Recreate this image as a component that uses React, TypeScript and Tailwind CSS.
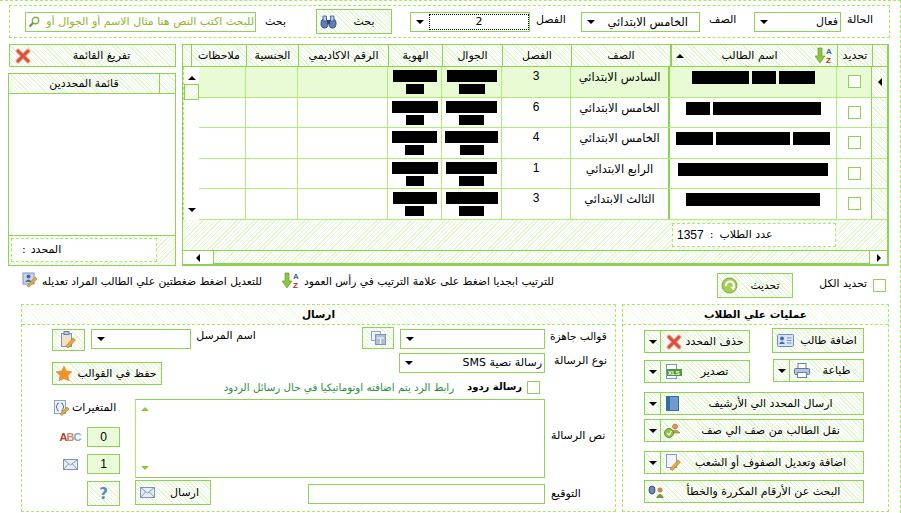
import React from "react";

const hatch =
  "bg-[repeating-linear-gradient(135deg,#ffffff_0,#ffffff_2px,#e2f7cd_2px,#e2f7cd_3px)]";
const hatchUp =
  "bg-[repeating-linear-gradient(45deg,#ffffff_0,#ffffff_2px,#e2f7cd_2px,#e2f7cd_3px)]";
const hatchFaint =
  "bg-[repeating-linear-gradient(45deg,#ffffff_0,#ffffff_2px,#f3fbea_2px,#f3fbea_3px)]";
const line = "border-[#8cd354]";
const soft = "border-[#afec78]";
const dashed = "border-dashed border-[#a8ea66]";

const Arrow = ({ up, side }: { up?: boolean; side?: "l" | "r" }) => {
  if (side === "l")
    return <span className="w-0 h-0 border-y-[4px] border-y-transparent border-r-[4px] border-r-black" />;
  if (side === "r")
    return <span className="w-0 h-0 border-y-[4px] border-y-transparent border-l-[4px] border-l-black" />;
  return up ? (
    <span className="w-0 h-0 border-x-[4px] border-x-transparent border-b-[4px] border-b-black" />
  ) : (
    <span className="w-0 h-0 border-x-[4px] border-x-transparent border-t-[4px] border-t-black" />
  );
};

const XIcon = () => (
  <svg width="16" height="16" viewBox="0 0 16 16">
    <path d="M3 3 L13 13 M13 3 L3 13" stroke="#f3b6a8" strokeWidth="5" strokeLinecap="round" />
    <path d="M3 3 L13 13 M13 3 L3 13" stroke="#d9503c" strokeWidth="3" strokeLinecap="round" />
  </svg>
);
const Binoculars = () => (
  <svg width="17" height="14" viewBox="0 0 17 14">
    <ellipse cx="4.5" cy="8.5" rx="3.5" ry="4.5" fill="#5f7fb5" stroke="#2f4a80" />
    <ellipse cx="12.5" cy="8.5" rx="3.5" ry="4.5" fill="#5f7fb5" stroke="#2f4a80" />
    <rect x="3" y="1" width="3.5" height="5" fill="#b8c8e4" stroke="#2f4a80" strokeWidth=".7" />
    <rect x="10.5" y="1" width="3.5" height="5" fill="#b8c8e4" stroke="#2f4a80" strokeWidth=".7" />
    <rect x="7" y="5" width="3" height="4" fill="#2f4a80" />
  </svg>
);
const Lens = () => (
  <svg width="12" height="12" viewBox="0 0 12 12">
    <circle cx="7.5" cy="4.5" r="3.2" fill="none" stroke="#7cb342" strokeWidth="1.4" />
    <path d="M5 7 L1.5 10.5" stroke="#5f9a2c" strokeWidth="2" />
  </svg>
);
const AZ = () => (
  <svg width="18" height="17" viewBox="0 0 18 17">
    <path d="M3 1 H7 V9 H10 L5 16 L0 9 H3 Z" fill="#8cc63f" stroke="#5f8f2a" strokeWidth=".6" />
    <text x="11" y="7" fontSize="8" fontWeight="700" fill="#3f5f9f" fontFamily="Liberation Sans">A</text>
    <text x="11" y="16" fontSize="8" fontWeight="700" fill="#b02a2a" fontFamily="Liberation Sans">Z</text>
  </svg>
);
const Refresh = () => (
  <svg width="17" height="17" viewBox="0 0 17 17">
    <circle cx="8.5" cy="8.5" r="7.5" fill="#a6cf5a" stroke="#7aa83a" />
    <path d="M5 9 A4 4 0 1 1 12 11" fill="none" stroke="#fff" strokeWidth="2" />
    <path d="M9.5 10 L14.5 10 L12.3 13.5 Z" fill="#fff" />
  </svg>
);
const EditUser = () => (
  <svg width="16" height="16" viewBox="0 0 16 16">
    <rect x="1" y="1" width="11" height="11" fill="#c9d6ec" stroke="#7f93bd" />
    <circle cx="6.5" cy="4.5" r="2" fill="#55688f" />
    <path d="M3 10 Q6.5 5 10 10 Z" fill="#55688f" />
    <path d="M5 14 L13 5 L15 7 L7 15 Z" fill="#e8a93c" stroke="#a8762a" strokeWidth=".6" />
  </svg>
);
const Card = () => (
  <svg width="17" height="13" viewBox="0 0 17 13">
    <rect x=".5" y=".5" width="16" height="12" rx="1" fill="#d8e3f5" stroke="#6f8cc0" />
    <circle cx="5" cy="4.5" r="2" fill="#3f69b0" />
    <path d="M2 10 Q5 5 8 10 Z" fill="#3f69b0" />
    <path d="M10 4 H14.5 M10 6.5 H14.5 M10 9 H14.5" stroke="#7f96c4" />
  </svg>
);
const Printer = () => (
  <svg width="16" height="15" viewBox="0 0 16 15">
    <rect x="4" y=".5" width="8" height="6" fill="#fff" stroke="#6b7fa8" />
    <rect x=".5" y="5.5" width="15" height="6" rx="1" fill="#b4c3de" stroke="#5f739c" />
    <rect x="3.5" y="9.5" width="9" height="5" fill="#fff" stroke="#6b7fa8" />
  </svg>
);
const Xls = () => (
  <svg width="16" height="15" viewBox="0 0 16 15">
    <rect x=".5" y=".5" width="10" height="14" fill="#fff" stroke="#7f93bd" />
    <rect x="1" y="5" width="15" height="7" fill="#4f9a3a" />
    <text x="2" y="11" fontSize="6" fontWeight="700" fill="#fff" fontFamily="Liberation Sans">XLS</text>
  </svg>
);
const Book = () => (
  <svg width="13" height="15" viewBox="0 0 13 15">
    <rect x=".5" y=".5" width="12" height="14" fill="#6f9ccf" stroke="#3f6a9f" />
    <rect x="1" y="1" width="3" height="13" fill="#2f6f9f" />
  </svg>
);
const MoveUser = () => (
  <svg width="17" height="15" viewBox="0 0 17 15">
    <circle cx="11" cy="3.5" r="2.5" fill="#d89a5a" stroke="#a86a2a" strokeWidth=".6" />
    <path d="M7 10 Q11 4 16 10 Z" fill="#d89a5a" stroke="#a86a2a" strokeWidth=".6" />
    <circle cx="5" cy="10" r="4.5" fill="#8cc63f" stroke="#5f8f2a" />
    <path d="M3 10 L5 12 L7.5 8" fill="none" stroke="#fff" strokeWidth="1.2" />
  </svg>
);
const PagePen = () => (
  <svg width="15" height="17" viewBox="0 0 15 17">
    <rect x=".5" y=".5" width="10" height="13" fill="#f2f5fb" stroke="#8a9cc0" />
    <path d="M4 15 L12 6 L14.5 8 L6.5 16.5 Z" fill="#e8a93c" stroke="#a8762a" strokeWidth=".6" />
  </svg>
);
const DupSearch = () => (
  <svg width="17" height="14" viewBox="0 0 17 14">
    <ellipse cx="4" cy="5" rx="3" ry="4" fill="#6f88b8" stroke="#34507f" />
    <circle cx="12" cy="5" r="2.5" fill="#c98a4a" />
    <path d="M8 13 Q12 5 16 13 Z" fill="#6f9a4a" />
  </svg>
);
const Template = () => (
  <svg width="15" height="14" viewBox="0 0 15 14">
    <rect x=".5" y=".5" width="9" height="9" fill="#eef2fa" stroke="#8fa3c8" />
    <rect x="4.5" y="3.5" width="10" height="10" fill="#aebfdd" stroke="#7f93bd" />
    <path d="M6 7 H13 M9.5 7 V13" stroke="#fff" />
  </svg>
);
const Clip = () => (
  <svg width="15" height="18" viewBox="0 0 15 18">
    <rect x=".5" y="2.5" width="10" height="13" fill="#f0e0c4" stroke="#7f93bd" />
    <rect x="3" y=".5" width="5" height="3" fill="#b8c8e4" stroke="#6b7fa8" />
    <path d="M5 15 L12 7 L14.5 9 L7 17 Z" fill="#e8a93c" stroke="#a8762a" strokeWidth=".6" />
  </svg>
);
const Star = () => (
  <svg width="16" height="15" viewBox="0 0 16 15">
    <path d="M8 0 L10.4 5 L16 5.7 L12 9.5 L13 15 L8 12.4 L3 15 L4 9.5 L0 5.7 L5.6 5 Z" fill="#f0932b" stroke="#d97c1a" strokeWidth=".5" />
  </svg>
);
const Braces = () => (
  <svg width="16" height="16" viewBox="0 0 16 16">
    <rect x=".5" y=".5" width="11" height="13" fill="#eef3fb" stroke="#8fa3c8" />
    <path d="M5 3 Q3 3 3 5 V6 L2 7 L3 8 V9 Q3 11 5 11 M7 3 Q9 3 9 5 V6 L10 7 L9 8 V9 Q9 11 7 11" fill="none" stroke="#4f6ea8" />
    <path d="M6 14 L13 7 L15 9 L8 15.5 Z" fill="#e8a93c" stroke="#a8762a" strokeWidth=".6" />
  </svg>
);
const Mail = () => (
  <svg width="15" height="11" viewBox="0 0 15 11">
    <rect x=".5" y=".5" width="14" height="10" fill="#e8eef8" stroke="#7f93bd" />
    <path d="M.5 .5 L7.5 6 L14.5 .5 M.5 10.5 L5.5 5 M14.5 10.5 L9.5 5" fill="none" stroke="#7f93bd" />
  </svg>
);

function Select({ width, height = "h-5", value, focus, pad = "pr-[2px]", size = "" }: {
  width: string;
  height?: string;
  value?: string;
  focus?: boolean;
  pad?: string;
  size?: string;
}) {
  return (
    <div className={`${width} ${height} border ${line} bg-white flex items-center shrink-0`}>
      <span className="w-[18px] flex justify-center shrink-0">
        <Arrow />
      </span>
      {focus ? (
        <div className="flex-1 h-4 border border-dotted border-black text-center leading-[13px]">{value}</div>
      ) : (
        <div dir="rtl" className={`flex-1 ${pad} ${size} leading-[14px] whitespace-nowrap`}>{value}</div>
      )}
    </div>
  );
}

// small hatched button, optional dropdown part on the left
function Btn({ width, label, icon, menu, iconLeft = "pl-1", pad = "pr-[7px]" }: {
  width: string;
  label?: string;
  icon?: React.ReactNode;
  menu?: boolean;
  iconLeft?: string;
  pad?: string;
}) {
  return (
    <div className={`${width} h-[23px] border ${line} ${hatchUp} flex items-center shrink-0`}>
      {menu && (
        <div className={`w-4 h-full border-r ${line} flex items-center justify-center shrink-0`}>
          <Arrow />
        </div>
      )}
      <div className={`w-6 flex justify-start shrink-0 ${iconLeft}`}>{icon}</div>
      <div className={`flex-1 text-center ${pad} whitespace-nowrap`}>{label}</div>
    </div>
  );
}

const Black = ({ w, h = "h-[12px]" }: { w: number; h?: string }) => (
  <div className={`bg-black ${h}`} style={{ width: w }} />
);

const rows = [
  { grade: "السادس الابتدائي", cls: "3", name: [57, 24, 36], id: [44, 18], phone: [50, 26] },
  { grade: "الخامس الابتدائي", cls: "6", name: [24, 108], id: [46, 18], phone: [51, 25] },
  { grade: "الخامس الابتدائي", cls: "4", name: [37, 74, 37], id: [45, 19], phone: [53, 24] },
  { grade: "الرابع الابتدائي", cls: "1", name: [150], id: [46, 18], phone: [51, 25] },
  { grade: "الثالث الابتدائي", cls: "3", name: [134], id: [44, 19], phone: [52, 25] },
];

const headCols = "grid grid-cols-[9px_55px_52px_90px_54px_60px_69px_99px_167px_35px_1fr]";
const rowCols = "grid grid-cols-[47px_52px_90px_54px_60px_69px_99px_167px_35px_1fr]";

function StudentGrid() {
  const heads = ["", "ملاحظات", "الجنسية", "الرقم الاكاديمي", "الهوية", "الجوال", "الفصل", "الصف"];
  return (
    <div className={`w-[707px] h-[222px] border-t border-l border-r-2 border-b-2 ${line} flex flex-col`}>
      <div className={`${headCols} h-[22px] border-b ${line} ${hatchUp} shrink-0`}>
        {heads.map((h, i) => (
          <div key={i} className={`border-r ${line} flex items-center justify-center whitespace-nowrap`}>
            {h}
          </div>
        ))}
        <div className={`border-l border-r ${line} flex items-center justify-between px-[4px]`}>
          <Arrow up />
          <span>اسم الطالب</span>
          <AZ />
        </div>
        <div className={`border-r ${line} flex items-center justify-center`}>تحديد</div>
        <div />
      </div>

      <div className="flex h-[153px] shrink-0">
        <div className="w-4 flex flex-col items-center shrink-0 border-l border-dashed border-[#a8ea66]">
          <div className="h-[17px] flex items-end pb-[4px]">
            <Arrow up />
          </div>
          <div className={`w-[15px] h-4 border ${line} ${hatch}`} />
          <div className="flex-1" />
          <div className="h-[14px] flex items-start pt-[2px]">
            <Arrow />
          </div>
        </div>
        <div className="flex-1 flex flex-col">
          {rows.map((r, i) => (
            <div key={i} className={`${rowCols} h-[31px] border-b ${soft} ${i === 0 ? "bg-[#e8fbd5]" : "bg-white"}`}>
              <div className={`border-r ${soft}`} />
              <div className={`border-r ${soft}`} />
              <div className={`border-r ${soft}`} />
              <div className={`border-r ${soft} flex flex-col items-center pt-[3px] gap-[2px]`}>
                <Black w={r.id[0]} />
                <Black w={r.id[1]} h="h-[10px]" />
              </div>
              <div className={`border-r ${soft} flex flex-col items-center pt-[3px] gap-[2px]`}>
                <Black w={r.phone[0]} />
                <Black w={r.phone[1]} h="h-[10px]" />
              </div>
              <div className={`border-r ${soft} text-center pt-[2px] font-['Liberation_Sans'] text-[12px]`}>{r.cls}</div>
              <div className={`border-r-2 ${line} text-center pt-[3px] text-[11.5px] whitespace-nowrap`}>{r.grade}</div>
              <div className={`border-r ${soft} flex justify-center gap-[3px] pt-[4px]`}>
                {r.name.map((w, j) => (
                  <Black key={j} w={w} h="h-[13px]" />
                ))}
              </div>
              <div className={`border-r ${line} flex justify-center pt-[8px]`}>
                <div className={`w-[13px] h-[13px] border ${line} bg-white`} />
              </div>
              <div className={`${hatchUp} flex items-center justify-center`}>{i === 0 && <Arrow side="l" />}</div>
            </div>
          ))}
        </div>
      </div>

      <div className={`h-[30px] ${hatch} flex justify-end pt-[3px] pr-[51px] shrink-0`}>
        <div className={`w-[164px] h-[24px] border ${dashed} bg-white flex items-center gap-[6px] pl-[4px]`}>
          <span className="font-['Liberation_Sans'] text-[12px]">1357</span>
          <span>:</span>
          <span>عدد الطلاب</span>
        </div>
      </div>

      <div className={`flex-1 flex border-t ${line} bg-white`}>
        <div className="w-[30px] flex items-center justify-center shrink-0">
          <Arrow side="l" />
        </div>
        <div className={`flex-1 border border-t-0 ${line} ${hatch}`} />
        <div className="w-[17px] flex items-center justify-center shrink-0">
          <Arrow side="r" />
        </div>
      </div>
    </div>
  );
}

function SelectedList() {
  return (
    <div className="w-[168px] flex flex-col">
      <div className={`ml-[1px] w-[167px] h-[23px] border ${line} ${hatchUp} flex items-center shrink-0`}>
        <div className="w-7 pl-[5px]">
          <XIcon />
        </div>
        <div className="flex-1 text-center pr-[10px]">تفريغ القائمة</div>
      </div>
      <div className={`mt-[6px] h-[193px] border ${line} flex flex-col`}>
        <div className={`h-5 border-b ${line} ${hatchUp} flex shrink-0`}>
          <div className="flex-1 text-center leading-[19px]">قائمة المحددين</div>
          <div className={`w-[16px] border-l ${line}`} />
        </div>
        <div className="flex-1" />
        <div className={`h-[30px] border-t ${line} ${hatch} pt-[2px] pl-[2px] shrink-0`}>
          <div className={`w-[146px] h-[24px] border ${dashed} bg-white flex items-center pl-[10px]`}>
            <span>:</span>
            <span className="ml-[5px]">المحدد</span>
          </div>
        </div>
      </div>
    </div>
  );
}

function SendPanel() {
  return (
    <div className={`w-[595px] h-[208px] border ${dashed} flex flex-col`}>
      <div className={`h-[20px] border-b ${dashed} ${hatchFaint} text-center font-bold text-[10.5px] leading-[19px] shrink-0`}>ارسال</div>
      <div className="pl-[30px] pt-[2px] flex flex-col">
        <div className="flex items-start h-[23px]">
          <div className={`w-[33px] h-[22px] border ${line} ${hatchUp} mt-[2px] flex items-center justify-center`}>
            <Clip />
          </div>
          <div className="ml-[6px] mt-[2px]">
            <Select width="w-[100px]" />
          </div>
          <div className="ml-1 w-[62px] mt-[2px] text-center whitespace-nowrap">اسم المرسل</div>
          <div className={`ml-[105px] w-[32px] h-[22px] border ${line} ${hatchUp} flex items-center justify-center`}>
            <Template />
          </div>
          <div className="ml-[6px] mt-[2px]">
            <Select width="w-[145px]" />
          </div>
          <div className="ml-[5px] mt-[2px] text-[10.5px] whitespace-nowrap">قوالب جاهزة</div>
        </div>

        <div className="flex h-[41px] mt-[3px]">
          <div className={`mt-[9px] w-[110px] h-[23px] border ${line} ${hatchUp} flex items-center shrink-0`}>
            <span className="pl-[3px]">
              <Star />
            </span>
            <span className="flex-1 text-center pl-[1px] whitespace-nowrap">حفظ في القوالب</span>
          </div>
          <div className="ml-[60px] w-[388px] flex flex-col shrink-0">
            <div className="flex pl-[177px]">
              <Select width="w-[146px]" value="رسالة نصية SMS" />
              <span className="ml-[9px] mt-[1px] whitespace-nowrap">نوع الرسالة</span>
            </div>
            <div className="flex items-center justify-end mt-[7px] pr-[70px]">
              <span className="text-[#1f8f3a] text-[10.3px] whitespace-nowrap">رابط الرد يتم اضافته اوتوماتيكيا في حال رسائل الردود</span>
              <span className="ml-[13px] font-bold text-[10px] whitespace-nowrap">رسالة ردود</span>
              <span className={`ml-[5px] w-[13px] h-[13px] border ${line} bg-white shrink-0`} />
            </div>
          </div>
        </div>

        <div className="flex mt-[5px]">
          <div className="w-[83px] flex flex-col items-end pr-[15px] shrink-0">
            <div className="flex items-center self-start h-[18px] gap-[2px] ml-[2px]">
              <Braces />
              <span className="whitespace-nowrap">المتغيرات</span>
            </div>
            <div className="flex items-center h-[20px] mt-[10px]">
              <span className="w-[34px] text-[11px] font-bold font-['Liberation_Sans'] text-center tracking-[-1px]">
                <span className="text-[#b5432b]">A</span>
                <span className="text-[#c98a6a]">B</span>
                <span className="text-[#7fa8c9]">C</span>
              </span>
              <div className={`w-[33px] h-[20px] border ${line} bg-[#eafbd9] text-center leading-[18px] font-['Liberation_Sans'] text-[12px]`}>0</div>
            </div>
            <div className="flex items-center h-[20px] mt-[7px]">
              <span className="w-[34px] flex justify-center">
                <Mail />
              </span>
              <div className={`w-[33px] h-[20px] border ${line} bg-[#eafbd9] text-center leading-[18px] font-['Liberation_Sans'] text-[12px]`}>1</div>
            </div>
            <div className={`mt-[7px] w-[33px] h-[25px] border ${line} ${hatchUp} flex items-center justify-center text-[#5f87c7] font-bold text-[15px]`}>?</div>
          </div>
          <div className="w-[410px] flex flex-col shrink-0">
            <div className={`h-[79px] border ${line} border-l-[#a8ea66] border-l-dashed flex flex-col pl-[5px] py-[7px] justify-between shrink-0`}>
              <span className="w-0 h-0 border-x-[4px] border-x-transparent border-b-[4px] border-b-[#8cc63f]" />
              <span className="w-0 h-0 border-x-[4px] border-x-transparent border-t-[4px] border-t-[#8cc63f]" />
            </div>
            <div className="flex justify-between mt-[2px]">
              <div className={`w-[76px] h-[25px] border ${line} ${hatchUp} flex items-center`}>
                <span className="pl-1">
                  <Mail />
                </span>
                <span className="flex-1 text-center pl-1">ارسال</span>
              </div>
              <div className={`w-[237px] h-5 mt-[4px] border ${line} bg-white`} />
            </div>
          </div>
          <div className="ml-[6px] flex flex-col w-[50px]">
            <div className="h-[74px] flex items-center whitespace-nowrap">نص الرسالة</div>
            <div className="mt-[14px] whitespace-nowrap">التوقيع</div>
          </div>
        </div>
      </div>
    </div>
  );
}

function OpsPanel() {
  return (
    <div className={`w-[267px] h-[208px] border ${dashed} flex flex-col`}>
      <div className={`h-[20px] border-b ${dashed} ${hatchFaint} text-center font-bold text-[10.5px] leading-[19px] shrink-0`}>عمليات علي الطلاب</div>
      <div className="pl-[21px] pt-[3px] flex flex-col w-[241px]">
        <div className="flex justify-between items-start h-[28px]">
          <div className="mt-[2px]">
            <Btn width="w-[106px]" label="حذف المحدد" menu icon={<XIcon />} iconLeft="pl-[5px]" pad="pr-[5px]" />
          </div>
          <div className={`w-[92px] h-[25px] border ${line} ${hatchUp} flex items-center`}>
            <span className="pl-[4px]"><Card /></span>
            <span className="flex-1 text-center whitespace-nowrap">اضافة طالب</span>
          </div>
        </div>
        <div className="flex justify-between items-start h-[33px] mt-[3px]">
          <div className="mt-[1px]">
            <Btn width="w-[106px]" label="تصدير" menu icon={<Xls />} iconLeft="pl-[5px]" pad="pr-[5px]" />
          </div>
          <Btn width="w-[91px]" label="طباعة" menu icon={<Printer />} iconLeft="pl-[4px]" pad="pr-[4px]" />
        </div>
        <Btn width="w-[220px]" label="ارسال المحدد الي الأرشيف" menu icon={<Book />} iconLeft="pl-[5px]" />
        <div className="mt-[4px]">
          <Btn width="w-[220px]" label="نقل الطالب من صف الي صف" menu icon={<MoveUser />} iconLeft="pl-[3px]" />
        </div>
        <div className="mt-[9px]">
          <Btn width="w-[220px]" label="اضافة وتعديل الصفوف أو الشعب" menu icon={<PagePen />} iconLeft="pl-[5px]" />
        </div>
        <div className="mt-[6px]">
          <Btn width="w-[220px]" label="البحث عن الأرقام المكررة والخطأ" icon={<DupSearch />} iconLeft="pl-[3px]" pad="pr-[5px]" />
        </div>
      </div>
    </div>
  );
}

export default function App() {
  return (
    <div dir="ltr" className={`w-[901px] h-[513px] overflow-hidden bg-white text-black text-[11px] leading-[14px] font-['DejaVu_Sans',sans-serif] border-t border-r ${dashed} flex flex-col`}>
      <div className={`ml-[9px] mt-1 w-[881px] h-[33px] border ${dashed} flex items-center pl-[15px] shrink-0`}>
        <div className={`w-[231px] h-[20px] border ${line} flex items-center text-[#8cb81f] overflow-hidden shrink-0`}>
          <span className="pl-[2px] pr-[2px] shrink-0">
            <Lens />
          </span>
          <span dir="rtl" className="flex-1 overflow-hidden whitespace-nowrap pr-[1px]">للبحث اكتب النص هنا مثال الاسم أو الجوال أو</span>
        </div>
        <span className="ml-[9px] w-[20px] whitespace-nowrap">بحث</span>
        <div className={`ml-[31px] w-[76px] h-[25px] border ${line} ${hatchUp} flex items-center shrink-0`}>
          <span className="pl-[3px]"><Binoculars /></span>
          <span className="flex-1 text-center">بحث</span>
        </div>
        <div className="ml-[18px]">
          <Select width="w-[120px]" value="2" focus />
        </div>
        <span className="ml-[6px] w-[29px] -mt-[3px] whitespace-nowrap">الفصل</span>
        <div className="ml-[16px]">
          <Select width="w-[119px]" value="الخامس الابتدائي" pad="pr-[11px]" size="text-[11.5px]" />
        </div>
        <span className="ml-[9px] w-[27px] -mt-[3px] whitespace-nowrap">الصف</span>
        <div className="ml-[18px]">
          <Select width="w-[87px]" value="فعال" />
        </div>
        <span className="ml-[6px] -mt-[3px] whitespace-nowrap">الحالة</span>
      </div>

      <div className="flex mt-[6px] ml-2 gap-[6px] shrink-0">
        <SelectedList />
        <StudentGrid />
      </div>

      <div className="flex items-center h-[25px] mt-[7px] ml-[22px] text-[10.7px] shrink-0">
        <span className="-mt-[11px]"><EditUser /></span>
        <span dir="rtl" className="ml-[2px] w-[222px] -mt-[7px] whitespace-nowrap">للتعديل اضغط ضغطتين علي الطالب المراد تعديله</span>
        <span className="ml-[20px] -mt-[11px]"><AZ /></span>
        <span dir="rtl" className="ml-[2px] w-[252px] -mt-[7px] whitespace-nowrap">للترتيب ابجديا اضغط على علامة الترتيب في رأس العمود</span>
        <div className={`ml-[163px] w-[76px] h-[25px] border ${line} ${hatchUp} flex items-center shrink-0`}>
          <span className="pl-[3px]"><Refresh /></span>
          <span className="flex-1 text-center">تحديث</span>
        </div>
        <span dir="rtl" className="ml-[25px] w-[49px] -mt-[3px] whitespace-nowrap">تحديد الكل</span>
        <span className={`ml-[6px] w-[13px] h-[13px] border ${line} bg-white shrink-0`} />
      </div>

      <div className="flex ml-[21px] mt-[6px] gap-[6px] shrink-0">
        <SendPanel />
        <OpsPanel />
      </div>
    </div>
  );
}
